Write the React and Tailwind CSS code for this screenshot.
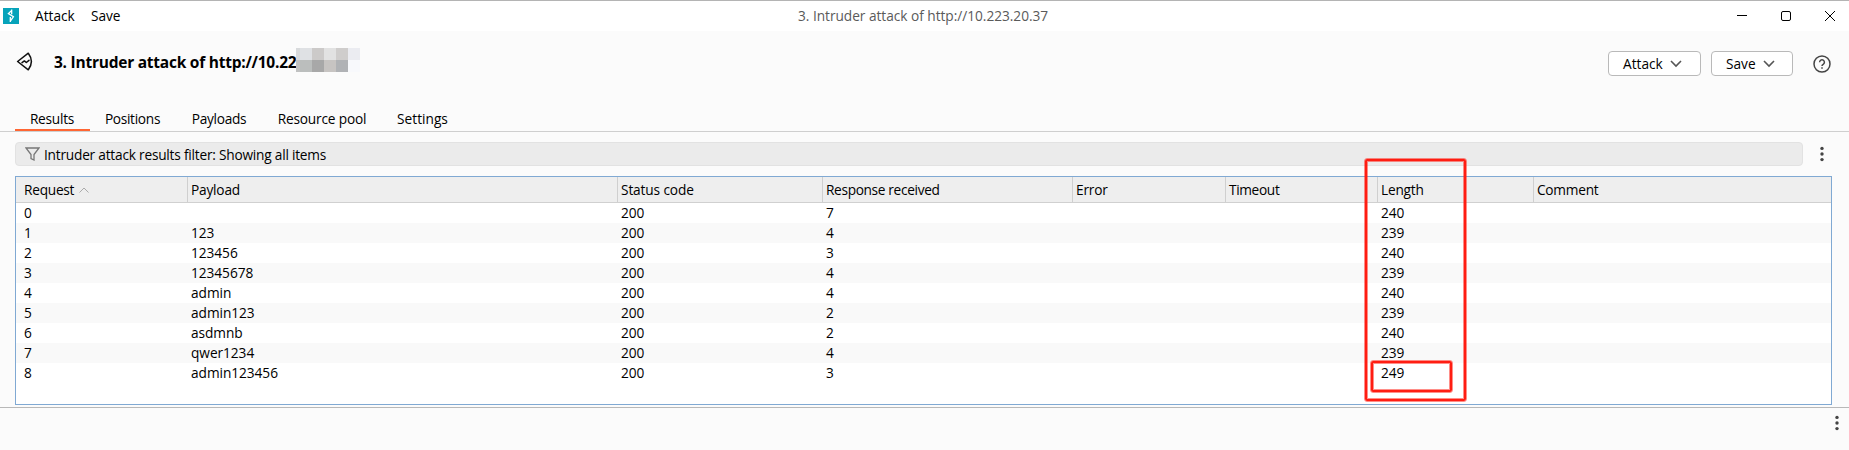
import React from "react";

const columns = [
  { label: "Request", tracking: "tracking-[-0.25px]" },
  { label: "Payload", tracking: "tracking-[-0.2px]" },
  { label: "Status code", tracking: "tracking-[-0.13px]" },
  { label: "Response received", tracking: "tracking-[-0.34px]" },
  { label: "Error", tracking: "tracking-[-0.2px]" },
  { label: "Timeout", tracking: "tracking-[-0.35px]" },
  { label: "Length", tracking: "tracking-[-0.2px]" },
  { label: "Comment", tracking: "tracking-[-0.25px]" },
];

const rows = [
  ["0", "", "200", "7", "", "", "240", ""],
  ["1", "123", "200", "4", "", "", "239", ""],
  ["2", "123456", "200", "3", "", "", "240", ""],
  ["3", "12345678", "200", "4", "", "", "239", ""],
  ["4", "admin", "200", "4", "", "", "240", ""],
  ["5", "admin123", "200", "2", "", "", "239", ""],
  ["6", "asdmnb", "200", "2", "", "", "240", ""],
  ["7", "qwer1234", "200", "4", "", "", "239", ""],
  ["8", "admin123456", "200", "3", "", "", "249", ""],
];

const grid = "grid grid-cols-[171px_430px_205px_250px_153px_152px_156px_1fr]";

const tabs = [
  { label: "Results", width: "w-[75px] pr-px tracking-[-0.25px]", active: true },
  { label: "Positions", width: "w-[85px] tracking-[-0.3px]" },
  { label: "Payloads", width: "w-[88px] tracking-[-0.28px]" },
  { label: "Resource pool", width: "w-[118px] tracking-[-0.18px]" },
  { label: "Settings", width: "w-[83px]" },
];

function Dots({ className }) {
  return (
    <svg className={className} width="4" height="16" viewBox="0 0 4 16" fill="#444">
      <circle cx="2" cy="2.4" r="1.7" />
      <circle cx="2" cy="8" r="1.7" />
      <circle cx="2" cy="13.6" r="1.7" />
    </svg>
  );
}

function MenuButton({ label, className }) {
  return (
    <button className={`flex h-[25px] items-center rounded-[4px] border border-[#b9b9b9] bg-white pl-[14px] ${className}`}>
      <span>{label}</span>
      <svg className="ml-[7px]" width="12" height="8" viewBox="0 0 12 8" fill="none" stroke="#555" strokeWidth="1.6">
        <path d="M1 1l5 5 5-5" />
      </svg>
    </button>
  );
}

export default function App() {
  return (
    <div className="relative flex h-[450px] w-[1849px] flex-col overflow-hidden bg-[#fbfbfb] font-['Open_Sans','Noto_Sans',sans-serif] text-[13.7px] leading-5 text-black">
      <header className="flex h-[31px] shrink-0 items-center border-t border-[#b4b4b4] bg-white pl-[3px]">
        <svg width="16" height="16" viewBox="0 0 16 16">
          <rect width="16" height="16" fill="#06a3ba" />
          <path d="M8.700 1.500v4.700M8.700 2.500L5.400 5.600l5 3.200-3 4.200M7.300 9v5" fill="none" stroke="#fff" strokeWidth="1.300" />
        </svg>
        <span className="ml-4 w-[56px]">Attack</span>
        <span className="tracking-[-0.1px]">Save</span>
        <span className="absolute left-[798px] tracking-[-0.03px] text-[#5a5a5a]">3. Intruder attack of http://10.223.20.37</span>
        <div className="ml-auto flex items-center gap-[34px] pr-[14px]">
          <svg width="10" height="10" viewBox="0 0 10 10" stroke="#000" fill="none"><path d="M0 4.5h10" /></svg>
          <svg width="10" height="10" viewBox="0 0 10 10" stroke="#000" fill="none"><rect x=".5" y=".5" width="9" height="9" rx="1.5" /></svg>
          <svg width="10" height="10" viewBox="0 0 10 10" stroke="#000" fill="none"><path d="M0 0l10 10M10 0L0 10" /></svg>
        </div>
      </header>

      <div className="flex h-[74px] shrink-0 items-start pl-[16px] pt-5">
        <svg className="mt-px" width="18" height="19" viewBox="0 0 18 19" fill="none" stroke="#111" strokeWidth="1.5" strokeLinejoin="round" strokeLinecap="round">
          <path d="M1.600 9.500L12.300 1.200q6.200 8.300 0 16.600z" />
          <path d="M6 10.600l2.400-1.700 1.900 1.600 2.700-2.200" />
        </svg>
        <h1 className="ml-5 mt-px w-[242px] whitespace-nowrap text-[15.5px] font-bold tracking-[-0.24px]">3. Intruder attack of http://10.22</h1>
        <div className="-mt-[3px] grid grid-cols-[4px_12px_12px_12px_12px_12px] grid-rows-[12px_12px]">
          <i className="bg-[#d8dadc]" /><i className="bg-[#dfe1e4]" /><i className="bg-[#cccac9]" /><i className="bg-[#e2e2e2]" /><i className="bg-[#cfcdcc]" /><i className="bg-[#ebecf1]" />
          <i className="bg-[#c0c1c1]" /><i className="bg-[#bbbebd]" /><i className="bg-[#a8a8a8]" /><i className="bg-[#c7c4c2]" /><i className="bg-[#b0b2b5]" /><i className="bg-[#f8f9fc]" />
        </div>
        <div className="ml-auto flex items-center gap-[10px] pr-[18px]">
          <MenuButton label="Attack" className="w-[93px]" />
          <MenuButton label="Save" className="w-[82px]" />
          <svg className="ml-[10px]" width="18" height="18" viewBox="0 0 18 18" fill="none" stroke="#444" strokeWidth="1.5">
            <circle cx="9" cy="9" r="8" />
            <path d="M6.6 7.2a2.4 2.4 0 1 1 3.6 2.1c-.8.5-1.2.8-1.2 1.7M9 12.2v1.5" />
          </svg>
        </div>
      </div>

      <nav className="flex h-[27px] shrink-0 border-b border-[#cfcfcf] pl-[15px]">
        {tabs.map((t) => (
          <div key={t.label} className={`flex h-[26px] items-center justify-center whitespace-nowrap ${t.width} ${t.active ? "border-b-2 border-[#ff6633] pt-[3px]" : "pt-px"}`}>
            {t.label}
          </div>
        ))}
      </nav>

      <div className="mt-[10px] flex h-6 shrink-0 items-center pl-[15px]">
        <div className="flex h-6 w-[1788px] items-center rounded-[4px] border border-[#e2e2e2] bg-[#ebebeb] pl-[9px]">
          <svg width="15" height="15" viewBox="0 0 15 15" fill="none" stroke="#777" strokeWidth="1.3">
            <path d="M1 1h13L9 7.5V13l-3-1.500V7.5z" />
          </svg>
          <span className="ml-[4px] mt-px tracking-[-0.22px]">Intruder attack results filter: Showing all items</span>
        </div>
        <Dots className="ml-[17px]" />
      </div>

      <section className="ml-[15px] mt-[10px] h-[229px] w-[1817px] shrink-0 border border-[#80a9d3] bg-white">
        <div className={`${grid} h-[26px] border-b border-[#d0d0d0] bg-[#eeeeee]`}>
          {columns.map((c, i) => (
            <div key={c.label} className={`flex items-center whitespace-nowrap pt-px ${c.tracking} ${i ? "border-l border-[#cfcfcf] pl-[3px]" : "pl-2"}`}>
              {c.label}
              {i === 0 && (
                <svg className="ml-[5px]" width="10" height="6" viewBox="0 0 10 6" fill="none" stroke="#aaa"><path d="M.5 5.500L5 1l4.500 4.500" /></svg>
              )}
            </div>
          ))}
        </div>
        {rows.map((r) => (
          <div key={r[0]} className={`${grid} h-5 tracking-[-0.05px] even:bg-white odd:bg-[#f9f9f9]`}>
            {r.map((v, i) => (
              <span key={i} className={i ? "pl-1" : "pl-2"}>{v}</span>
            ))}
          </div>
        ))}
      </section>

      <footer className="mt-[2px] flex flex-1 justify-end border-t border-[#b8b8b8] pr-[10px] pt-[7px]">
        <Dots />
      </footer>

      <div className="absolute left-[1365px] top-[159px] h-[242px] w-[101px] rounded-[2px] border-2 border-[#ff1d12] inset-ring inset-ring-[#ff1d12]/50 outline outline-[#ff1d12]/50" />
      <div className="absolute left-[1371px] top-[361px] h-[31px] w-[81px] rounded-[2px] border-2 border-[#ff1d12] inset-ring inset-ring-[#ff1d12]/50 outline outline-[#ff1d12]/50" />
    </div>
  );
}
